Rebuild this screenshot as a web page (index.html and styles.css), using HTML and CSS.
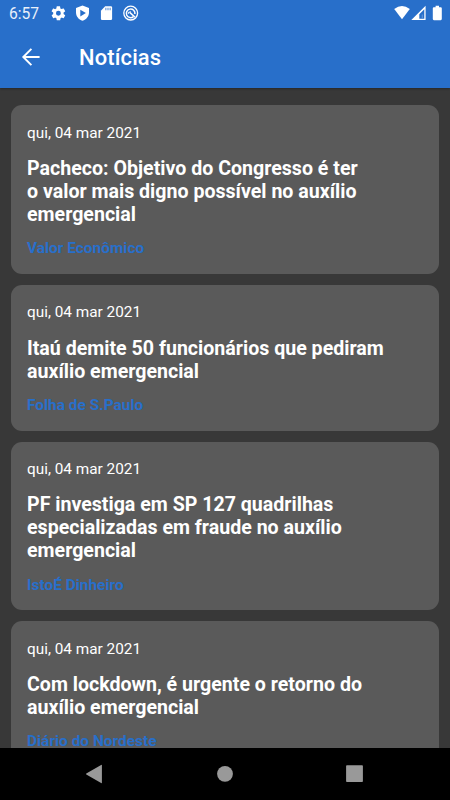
FILE: index.html
```html
<!DOCTYPE html>
<html lang="pt-BR">
<head>
<meta charset="utf-8">
<title>Notícias</title>
<link rel="stylesheet" href="styles.css">
</head>
<body>
<div class="screen">
  <header class="top">
    <div class="status">
      <span class="clock">6:57</span>
      <svg class="notifications" width="90" height="26" viewBox="0 0 90 26" fill="#fff">
        <g transform="translate(0 4.900) scale(.7)"><path d="M19.400 13a7.700 7.700 0 0 0 0-2l2.100-1.650a.5.5 0 0 0 .1-.64l-2-3.460a.5.5 0 0 0-.6-.22l-2.500 1a7.300 7.300 0 0 0-1.700-1l-.4-2.640A.5.5 0 0 0 14 2h-4a.5.5 0 0 0-.5.420L9.100 5.100a7.700 7.700 0 0 0-1.700 1l-2.400-1a.5.5 0 0 0-.6.200l-2 3.460a.5.5 0 0 0 .1.640L4.600 11a7.900 7.900 0 0 0 0 2l-2.100 1.650a.5.5 0 0 0-.1.640l2 3.460c.1.200.4.300.6.220l2.500-1a7.300 7.300 0 0 0 1.700 1l.4 2.640c0 .2.200.4.500.4h4c.2 0 .4-.2.500-.4l.4-2.640a7.700 7.700 0 0 0 1.700-1l2.400 1c.2.100.5 0 .6-.2l2-3.460a.5.5 0 0 0-.1-.64zM12 15.500a3.500 3.500 0 1 1 0-7 3.500 3.500 0 0 1 0 7z"/></g>
        <path fill-rule="evenodd" d="M32.500 5.600 39 8v4.500c0 3.700-2.700 7.200-6.500 8.200-3.800-1-6.500-4.500-6.500-8.200V8zM30.300 9.700v6.700l5.600-3.350z"/>
        <path d="M55.200 6.300h5.700q1.200 0 1.200 1.200v11.200q0 1.200-1.200 1.200h-8.800q-1.200 0-1.200-1.200v-8z"/>
        <path d="M55 7.800h1.600v2.500H55zm2.200 0h1.600v2.500h-1.600zm2.200 0H61v2.500h-1.600z" fill="#8fb4e5"/>
        <g fill="none" stroke="#fff"><circle cx="80.700" cy="13.100" r="6.900" stroke-width="1.300"/><path d="M83.500 16.600a4.300 4.300 0 1 1 1.400-2.600" stroke-width="1.500"/><path d="m80 12.600 5 4.700" stroke-width="1.500"/><path d="M78.200 13.800q.2-2.200 2.600-2" stroke-width="1.200"/></g>
      </svg>
      <svg class="signals" width="50" height="26" viewBox="0 0 50 26">
        <path d="M.2 8.900Q8 3.100 15.800 8.900L8 19.300z" fill="#fff"/>
        <path fill="#fff" fill-rule="evenodd" d="M31.600 5.800v14.300H17.300zM30.300 9.200l-5 5v4.600h5z"/>
        <path d="M27.700 14.500v4.300h1.300v-4.300z" fill="#5b92d8"/>
        <path d="M41.600 5.700h3.400v1.500h1.700q1.100 0 1.100 1.100v10.800q0 1.100-1.100 1.100h-6.800q-1.100 0-1.100-1.100V8.300q0-1.100 1.100-1.100h1.700z" fill="#fff"/>
      </svg>
    </div>
    <div class="bar">
      <svg class="back" width="20" height="20" viewBox="0 0 20 20" fill="none" stroke="#fff" stroke-width="1.900"><path d="M18.600 10H2.500M10.400 1.900 2.300 10l8.100 8.100"/></svg>
      <h1>Notícias</h1>
    </div>
  </header>
  <main class="list">
    <article class="card">
      <time>qui, 04 mar 2021</time>
      <h2>Pacheco: Objetivo do Congresso é ter<br>o valor mais digno possível no auxílio<br>emergencial</h2>
      <p class="source">Valor Econômico</p>
    </article>
    <article class="card">
      <time>qui, 04 mar 2021</time>
      <h2>Itaú demite 50 funcionários que pediram<br>auxílio emergencial</h2>
      <p class="source">Folha de S.Paulo</p>
    </article>
    <article class="card">
      <time>qui, 04 mar 2021</time>
      <h2>PF investiga em SP 127 quadrilhas<br>especializadas em fraude no auxílio<br>emergencial</h2>
      <p class="source">IstoÉ Dinheiro</p>
    </article>
    <article class="card">
      <time>qui, 04 mar 2021</time>
      <h2>Com lockdown, é urgente o retorno do<br>auxílio emergencial</h2>
      <p class="source">Diário do Nordeste</p>
    </article>
  </main>
  <nav class="navbar">
    <svg width="450" height="52" viewBox="0 0 450 52" fill="#999">
      <path d="M101.900 17.300v17.300q0 .9-.8.400L86.300 26.400q-.6-.4 0-.8l14.800-8.700q.8-.4.8.4z"/>
      <circle cx="225" cy="25.800" r="7.900"/>
      <rect x="346.100" y="17.300" width="16.800" height="16.800" rx=".8"/>
    </svg>
  </nav>
</div>
</body>
</html>
```
FILE: styles.css
```css
* { box-sizing: border-box; }
body { margin: 0; background: #383838; font-family: Roboto, sans-serif; color: #fff; }
h1, h2, p { margin: 0; }
svg { display: block; }
.screen { height: 800px; display: flex; flex-direction: column; overflow: hidden; }
.top { flex: none; height: 87.500px; background: #286fca; box-shadow: 0 1px 2px rgba(0, 0, 0, .3); }
.status { height: 26px; display: flex; align-items: center; padding: 0 2px 0 9px; }
.clock { width: 41px; font-size: 15.600px; line-height: 26px; padding-top: 2px; color: #e8f0fa; }
.signals { margin-left: auto; margin-right: 4px; }
.bar { height: 61.500px; display: flex; align-items: center; padding-left: 21px; }
.bar h1 { margin-left: 38px; font-size: 21.900px; line-height: 26px; font-weight: 500; letter-spacing: .15px; padding-top: 3px; }
.list { flex: 1; min-height: 0; overflow: hidden; padding: 17.800px 11px 0; }
.card { background: #5a5a5a; border-radius: 11px; padding: 18.500px 16px 16.200px; margin-bottom: 10.950px; }
.card time { display: block; font-size: 15.350px; line-height: 18.500px; }
.card h2 { font-size: 19.600px; line-height: 22.900px; font-weight: 700; margin: 15.800px 0 12.500px; white-space: nowrap; }
.source { font-size: 15.450px; line-height: 18.500px; font-weight: 700; color: #286fca; }
.navbar { flex: none; height: 52.400px; background: #000; }
```
